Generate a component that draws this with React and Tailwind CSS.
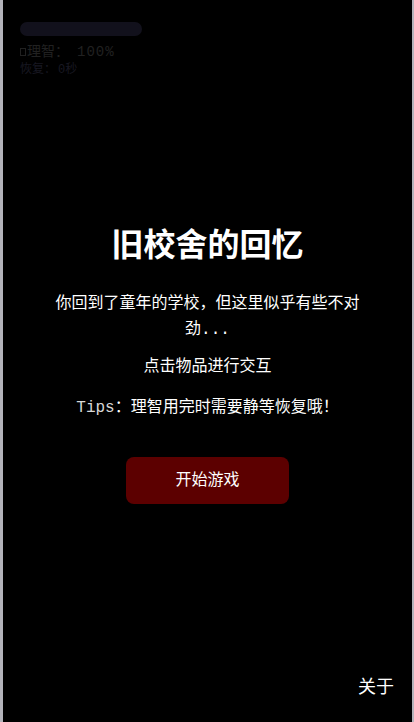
export default function App() {
  return (
    <div
      className="relative h-[722px] w-[414px] overflow-hidden bg-[#b3b3ba]"
      style={{ fontFamily: '"Liberation Mono", "Noto Sans CJK SC", monospace' }}
    >
      {/* start screen overlay */}
      <div className="absolute inset-y-0 left-[3px] right-[2px] flex flex-col items-center justify-center bg-black pt-[11px] text-white">
        {/* sanity HUD, dimmed behind the overlay */}
        <div className="absolute left-[17px] top-[22px] flex flex-col">
          <div className="h-[14px] w-[122px] rounded-full bg-[#12111c]" />
          <div className="mt-[8px] flex items-center text-[14px] leading-[16px] text-[#212121]">
            <span className="mr-[1px] inline-block h-[8px] w-[6px] border border-[#212121]" />
            <span>理智：</span>
            <span className="ml-[8px] tracking-[1px]">100%</span>
          </div>
          <div className="mt-[3px] flex text-[12px] leading-[14px] text-[#181822]">
            <span>恢复：</span>
            <span className="ml-[2px]">0秒</span>
          </div>
        </div>

        <h1 className="text-[32px] font-bold leading-[38px]">旧校舍的回忆</h1>
        <p className="mt-[24px] max-w-[312px] text-center text-[16px] leading-[26px]">
          你回到了童年的学校，但这里似乎有些不对劲...
        </p>
        <p className="mt-[11px] text-[16px] leading-[26px]">点击物品进行交互</p>
        <p className="mt-[15px] text-[16px] leading-[26px]">
          <span className="text-[#d8d8d8]">Tips</span>：理智用完时需要静等恢复哦！
        </p>
        <button className="mt-[36px] h-[47px] w-[163px] rounded-[8px] bg-[#5c0000] text-[16px] text-white">
          开始游戏
        </button>

        <button className="absolute bottom-[22px] right-[18px] text-[18px] leading-[24px] text-white">
          关于
        </button>
      </div>
    </div>
  );
}
